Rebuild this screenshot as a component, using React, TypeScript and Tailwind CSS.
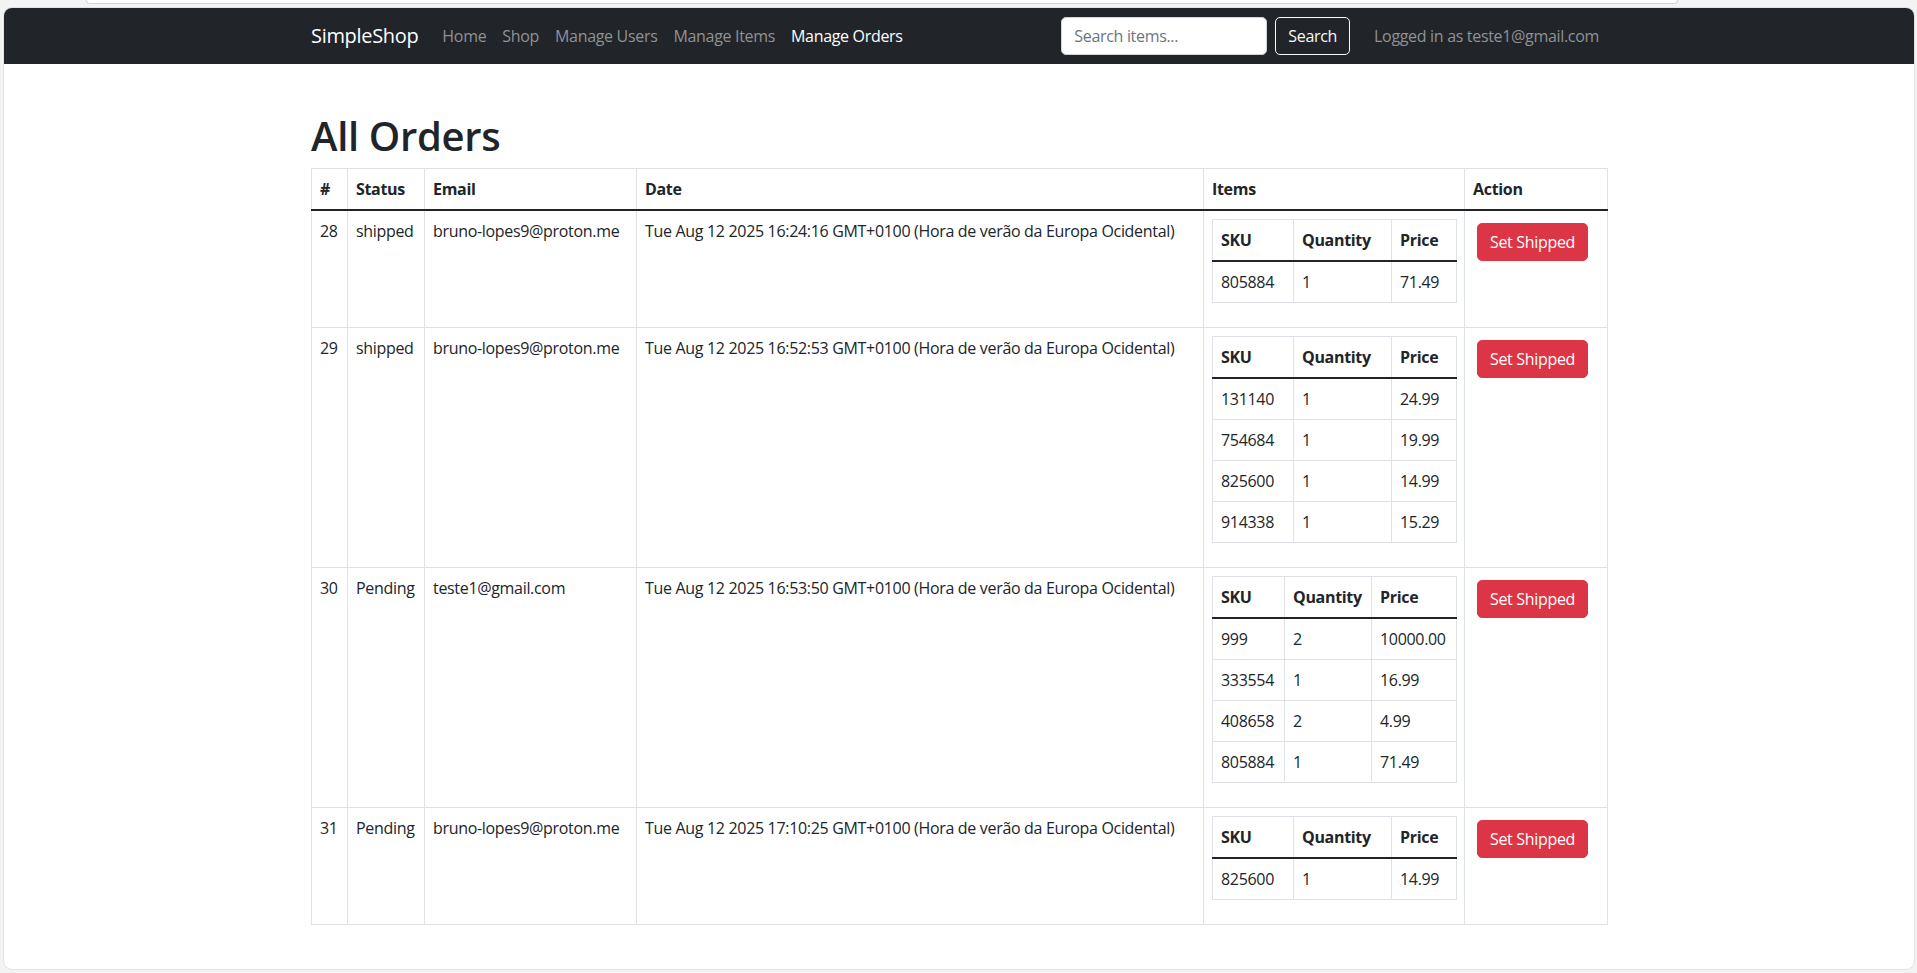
import React from "react";

type Order = {
  id: number;
  status: string;
  email: string;
  date: string;
  cols: [string, string, string];
  items: [string, string, string][];
};

const orders: Order[] = [
  {
    id: 28,
    status: "shipped",
    email: "bruno-lopes9@proton.me",
    date: "Tue Aug 12 2025 16:24:16 GMT+0100 (Hora de verão da Europa Ocidental)",
    cols: ["w-[81px]", "w-[98px]", "w-[65px]"],
    items: [["805884", "1", "71.49"]],
  },
  {
    id: 29,
    status: "shipped",
    email: "bruno-lopes9@proton.me",
    date: "Tue Aug 12 2025 16:52:53 GMT+0100 (Hora de verão da Europa Ocidental)",
    cols: ["w-[81px]", "w-[98px]", "w-[65px]"],
    items: [
      ["131140", "1", "24.99"],
      ["754684", "1", "19.99"],
      ["825600", "1", "14.99"],
      ["914338", "1", "15.29"],
    ],
  },
  {
    id: 30,
    status: "Pending",
    email: "teste1@gmail.com",
    date: "Tue Aug 12 2025 16:53:50 GMT+0100 (Hora de verão da Europa Ocidental)",
    cols: ["w-[72px]", "w-[87px]", "w-[85px]"],
    items: [
      ["999", "2", "10000.00"],
      ["333554", "1", "16.99"],
      ["408658", "2", "4.99"],
      ["805884", "1", "71.49"],
    ],
  },
  {
    id: 31,
    status: "Pending",
    email: "bruno-lopes9@proton.me",
    date: "Tue Aug 12 2025 17:10:25 GMT+0100 (Hora de verão da Europa Ocidental)",
    cols: ["w-[81px]", "w-[98px]", "w-[65px]"],
    items: [["825600", "1", "14.99"]],
  },
];

const cell = "border border-[#dee2e6] px-2 py-2 align-top text-left";

const ItemsTable = ({ order }: { order: Order }) => (
  <table className="w-full table-fixed border-collapse mb-4">
    <thead>
      <tr>
        <th className={`${cell} font-bold ${order.cols[0]}`}>SKU</th>
        <th className={`${cell} font-bold ${order.cols[1]}`}>Quantity</th>
        <th className={`${cell} font-bold ${order.cols[2]}`}>Price</th>
      </tr>
    </thead>
    <tbody className="border-t-2 border-t-[#212529]">
      {order.items.map((it, i) => (
        <tr key={i}>
          <td className={cell}>{it[0]}</td>
          <td className={cell}>{it[1]}</td>
          <td className={cell}>{it[2]}</td>
        </tr>
      ))}
    </tbody>
  </table>
);

const App = () => {
  return (
    <div className="h-screen bg-[#f3f3f3] flex flex-col font-['Open_Sans',sans-serif] tracking-[-0.02em] text-base leading-6 text-[#212529]">
      <div className="h-2 shrink-0 flex">
        <div className="ml-[86px] w-[1592px] h-[4px] rounded-b-[6px] border-b border-x border-[#d4d4d4] bg-white" />
      </div>

      <div className="flex-1 ml-1 mr-[3px] mb-1 rounded-lg bg-white overflow-hidden shadow-[0_0_0_1px_#e2e2e2]">
        <nav className="bg-[#212529] h-14 py-2">
          <div className="w-[1320px] mx-auto px-3 flex items-center h-10">
            <span className="text-xl text-white mr-4 py-[5px]">SimpleShop</span>
            <ul className="flex flex-1">
              {["Home", "Shop", "Manage Users", "Manage Items"].map((l) => (
                <li key={l} className="px-2 py-2 text-[#8f9194]">{l}</li>
              ))}
              <li className="px-2 py-2 text-white">Manage Orders</li>
            </ul>
            <form className="flex" onSubmit={(e) => e.preventDefault()}>
              <input
                className="w-[206px] h-[38px] mr-2 px-3 rounded-[5px] bg-white border border-[#ced4da] text-[#212529] placeholder:text-[#6c757d] outline-none"
                placeholder="Search items..."
              />
              <button className="h-[38px] px-3 rounded-[5px] border border-[#f8f9fa] text-[#f8f9fa]">
                Search
              </button>
            </form>
            <span className="ml-6 mr-2 text-[#8f9194]">Logged in as teste1@gmail.com</span>
          </div>
        </nav>

        <main className="w-[1320px] mx-auto px-3 mt-12">
          <h1 className="text-[40px] leading-[1.2] font-semibold mb-2">All Orders</h1>
          <table className="w-full table-fixed border-collapse mb-4">
            <thead>
              <tr>
                <th className={`${cell} font-bold w-[36px]`}>#</th>
                <th className={`${cell} font-bold w-[77px]`}>Status</th>
                <th className={`${cell} font-bold w-[212px]`}>Email</th>
                <th className={`${cell} font-bold w-[567px]`}>Date</th>
                <th className={`${cell} font-bold w-[261px]`}>Items</th>
                <th className={`${cell} font-bold w-[143px]`}>Action</th>
              </tr>
            </thead>
            <tbody className="border-t-2 border-t-[#212529]">
              {orders.map((o) => (
                <tr key={o.id}>
                  <td className={cell}>{o.id}</td>
                  <td className={cell}>{o.status}</td>
                  <td className={`${cell} whitespace-nowrap`}>{o.email}</td>
                  <td className={`${cell} whitespace-nowrap`}>{o.date}</td>
                  <td className={cell}>
                    <ItemsTable order={o} />
                  </td>
                  <td className={cell}>
                    <button className="m-1 h-[38px] px-3 rounded-[5px] bg-[#dc3545] border border-[#dc3545] text-white">
                      Set Shipped
                    </button>
                  </td>
                </tr>
              ))}
            </tbody>
          </table>
        </main>
      </div>
    </div>
  );
};

export default App;
